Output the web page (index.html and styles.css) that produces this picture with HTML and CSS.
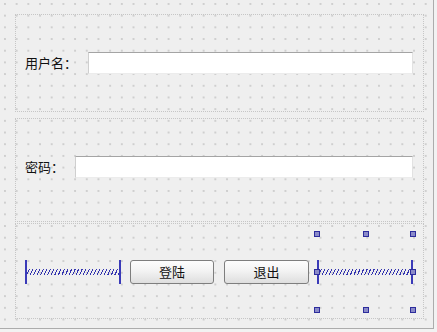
FILE: index.html
```html
<!DOCTYPE html>
<html>
<head>
<meta charset="utf-8">
<link rel="stylesheet" href="styles.css">
</head>
<body>
<div class="form">
  <div class="frame frame1">
    <span class="label">用户名：</span>
    <div class="input input-user"></div>
  </div>
  <div class="frame frame2">
    <span class="label">密码：</span>
    <div class="input input-pass"></div>
  </div>
  <div class="frame frame3">
    <div class="spacer spacer-left"><div class="spring"></div></div>
    <button class="btn btn-login">登陆</button>
    <button class="btn btn-exit">退出</button>
    <div class="spacer spacer-right">
      <div class="spring"></div>
      <span class="handle h-tl"></span>
      <span class="handle h-tc"></span>
      <span class="handle h-tr"></span>
      <span class="handle h-ml"></span>
      <span class="handle h-mr"></span>
      <span class="handle h-bl"></span>
      <span class="handle h-bc"></span>
      <span class="handle h-br"></span>
    </div>
  </div>
</div>
</body>
</html>
```
FILE: styles.css
```css
html, body {
  margin: 0;
  padding: 0;
}
body {
  width: 437px;
  height: 332px;
  overflow: hidden;
  background-color: #f2f2f2;
  font-family: "Noto Sans CJK SC", "Noto Sans", sans-serif;
  font-size: 13px;
  color: #111;
}
.form {
  box-sizing: border-box;
  width: 434px;
  height: 329px;
  border-right: 1px solid #acacac;
  border-bottom: 1px solid #acacac;
  background-color: #efefef;
  background-image: radial-gradient(circle, #c2c2c2 0.6px, transparent 0.9px);
  background-size: 11.7px 11.7px;
  background-position: -0.9px -1.9px;
  padding: 14px 0 0 15px;
  display: flex;
  flex-direction: column;
}
.frame {
  box-sizing: border-box;
  width: 409px;
  border: 1px dotted #c6c6c6;
  display: flex;
  align-items: center;
}
.frame1 {
  height: 98px;
  padding: 0 10px 1px 9px;
}
.frame2 {
  height: 104px;
  margin-top: 6px;
  padding: 0 10px 6px 9px;
}
.frame3 {
  height: 96px;
  margin-top: 1px;
  padding: 1px 9px 0 9px;
}
.label {
  line-height: 16px;
  white-space: nowrap;
}
.frame1 .label { width: 63px; }
.frame2 .label { width: 50px; }
.input {
  flex: 1;
  height: 22px;
  box-sizing: border-box;
  background: #ffffff;
  border-top: 1px solid #a4a4a4;
  border-left: 1px solid #cfcfcf;
  border-right: 1px solid #e2e2e2;
  border-bottom: 1px solid #ececec;
}
.spacer {
  position: relative;
  width: 96px;
  height: 24px;
  box-sizing: border-box;
  border-left: 2px solid #3a3ab8;
  border-right: 2px solid #3a3ab8;
  display: flex;
  align-items: center;
}
.spring {
  flex: 1;
  height: 6px;
  background-image: repeating-linear-gradient(
    115deg,
    transparent 0px,
    transparent 1.6px,
    #3434b0 1.6px,
    #3434b0 2.6px,
    transparent 2.6px,
    transparent 3.2px
  );
}
.btn {
  box-sizing: border-box;
  height: 24px;
  padding: 0;
  border: 1px solid #7e7e7e;
  border-radius: 3px;
  background: linear-gradient(#fdfdfd, #f3f3f3 45%, #dedede);
  font-family: "Noto Sans CJK SC", "Noto Sans", sans-serif;
  font-size: 13px;
  color: #111;
  line-height: 20px;
}
.btn-login {
  width: 84px;
  margin-left: 9px;
}
.btn-exit {
  width: 85px;
  margin-left: 10px;
}
.spacer-right {
  margin-left: 8px;
}
.handle {
  position: absolute;
  width: 6px;
  height: 6px;
  box-sizing: border-box;
  border: 1px solid #2c2c9c;
  background: #8a8ac8;
}
.h-tl { left: -5px; top: -29px; }
.h-tc { left: 44px; top: -29px; }
.h-tr { right: -5px; top: -29px; }
.h-ml { left: -5px; top: 9px; }
.h-mr { right: -5px; top: 9px; }
.h-bl { left: -5px; bottom: -29px; }
.h-bc { left: 44px; bottom: -29px; }
.h-br { right: -5px; bottom: -29px; }
```
